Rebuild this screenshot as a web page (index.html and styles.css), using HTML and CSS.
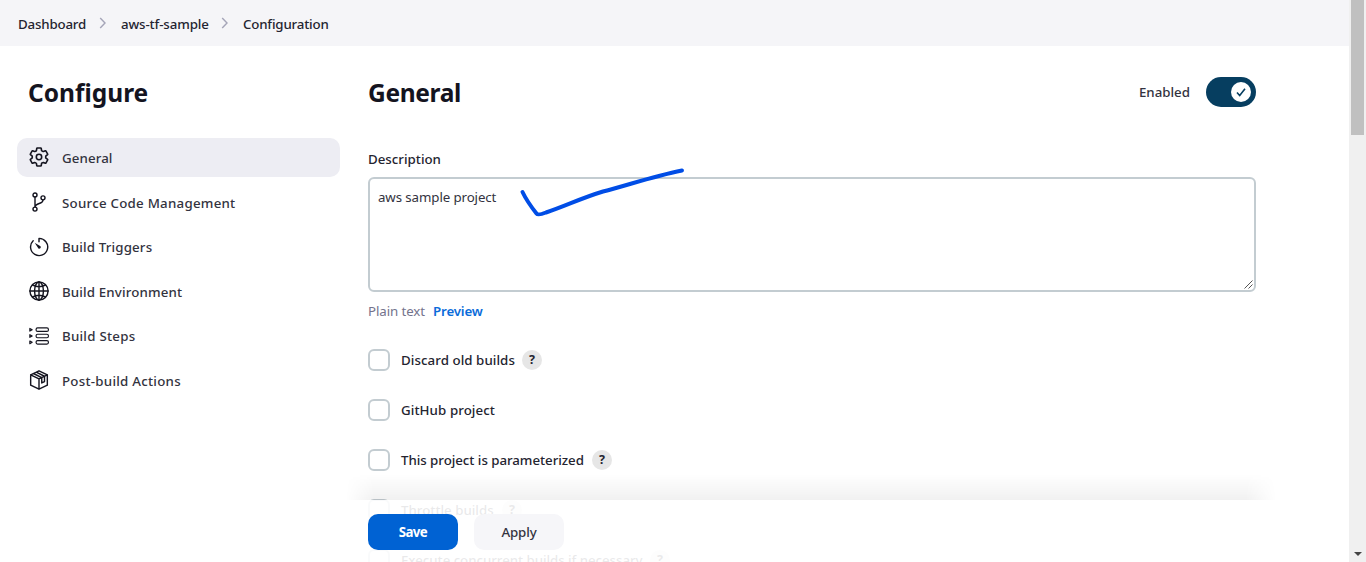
FILE: index.html
```html
<!DOCTYPE html>
<html lang="en">
<head>
<meta charset="utf-8">
<title>aws-tf-sample Config</title>
<link rel="stylesheet" href="styles.css">
</head>
<body>
<div class="page">
  <nav class="breadcrumbs">
    <span class="crumb crumb-first">Dashboard</span>
    <svg class="chevron" viewBox="0 0 8 12"><path d="M1.2 1l4.800 5-4.800 5"/></svg>
    <span class="crumb crumb-project">aws-tf-sample</span>
    <svg class="chevron" viewBox="0 0 8 12"><path d="M1.2 1l4.800 5-4.800 5"/></svg>
    <span class="crumb">Configuration</span>
  </nav>
  <div class="columns">
    <aside class="sidebar">
      <h1 class="title side-title">Configure</h1>
      <div class="tasks">
        <a class="task active"><svg class="icon" viewBox="18 18 476 476"><circle cx="256" cy="256" r="64"/><path d="M416.39 256a154.34 154.34 0 01-1.53 20.79l45.21 35.46a10.81 10.81 0 012.45 13.75l-42.77 74a10.81 10.81 0 01-13.14 4.59l-44.9-18.08a16.11 16.11 0 00-15.17 1.75A164.48 164.48 0 01325 400.8a15.94 15.94 0 00-8.82 12.14l-6.73 47.89a11.08 11.08 0 01-10.68 9.17h-85.54a11.11 11.11 0 01-10.69-8.87l-6.72-47.82a16.07 16.07 0 00-9-12.22 155.3 155.3 0 01-21.46-12.57 16 16 0 00-15.11-1.71l-44.89 18.07a10.81 10.81 0 01-13.14-4.58l-42.77-74a10.8 10.8 0 012.45-13.75l38.21-30a16.05 16.05 0 006-14.08c-.36-4.17-.58-8.33-.58-12.5s.21-8.27.58-12.35a16 16 0 00-6.07-13.94l-38.19-30A10.81 10.81 0 0149.48 186l42.77-74a10.81 10.81 0 0113.14-4.59l44.9 18.08a16.11 16.11 0 0015.17-1.75A164.48 164.48 0 01187 111.2a15.94 15.94 0 008.82-12.14l6.73-47.89A11.08 11.08 0 01213.23 42h85.54a11.11 11.11 0 0110.69 8.87l6.72 47.82a16.07 16.07 0 009 12.22 155.3 155.3 0 0121.46 12.57 16 16 0 0015.11 1.71l44.89-18.07a10.81 10.81 0 0113.14 4.58l42.77 74a10.8 10.8 0 01-2.45 13.75l-38.21 30a16.05 16.05 0 00-6.05 14.08c.33 4.14.55 8.3.55 12.47z"/></svg><span>General</span></a>
        <a class="task t-scm"><svg class="icon" viewBox="0 0 24 24"><circle cx="7.200" cy="3.500" r="2.400"/><circle cx="7.200" cy="20.500" r="2.400"/><circle cx="16.800" cy="7" r="2.400"/><path d="M7.200 6v12M16.800 9.500c0 5.500-8.800 3-9.600 8.500"/></svg><span>Source Code Management</span></a>
        <a class="task t-triggers"><svg class="icon" viewBox="0 0 24 24"><path d="M12 5.800V1.700A10.300 10.300 0 1 1 5 4.600"/><path class="solid" d="M6.800 6.800l7 4.400a1.800 1.800 0 0 1-2.500 2.500z"/></svg><span>Build Triggers</span></a>
        <a class="task t-env"><svg class="icon" viewBox="0 0 24 24"><circle cx="12" cy="12" r="10.900"/><ellipse cx="12" cy="12" rx="5.300" ry="10.900"/><path d="M12 1v22M1 12h22M4.300 4.800q7.700 4 15.400 0M4.300 19.200q7.700-4 15.400 0"/></svg><span>Build Environment</span></a>
        <a class="task"><svg class="icon thin" viewBox="0 0 24 24"><rect x="8.500" y="2.300" width="14.800" height="4.200" rx="1.800"/><rect x="8.500" y="9.900" width="14.800" height="4.200" rx="1.800"/><rect x="8.500" y="17.500" width="14.800" height="4.200" rx="1.800"/><path d="M1 2.900v3.200l2.800-1.600zM1 10.400v3.200l2.800-1.600zM1 18v3.200l2.800-1.600z"/></svg><span>Build Steps</span></a>
        <a class="task t-post"><svg class="icon" viewBox="0 0 24 24"><path d="M12 1l10 4.800v12.400L12 23 2 18.200V5.800zM2 5.800l10 4.800 10-4.800M12 10.600V23M5.300 4.200l10 4.900M8.600 2.600l10 4.900M15.300 9.100v6.400l3.300-1.600V7.500"/></svg><span>Post-build Actions</span></a>
      </div>
    </aside>
    <main class="main">
      <header class="heading">
        <h1 class="title main-title">General</h1>
        <div class="enable"><span class="enabled-text">Enabled</span>
          <span class="toggle"><span class="knob"><svg class="check" viewBox="0 0 20 20"><path d="M6 10.500l2.700 3L14 6.800"/></svg></span></span>
        </div>
      </header>
      <label class="label">Description</label>
      <div class="textarea"><span class="value">aws sample project</span>
        <svg class="grip" viewBox="0 0 9 9"><path d="M.5 8.500l8-8M4.500 8.500l4-4"/></svg>
        <svg class="stroke" viewBox="0 0 170 54"><path d="M4.500 7Q9 16.500 18.500 28.500Q20 30.500 28 27.500C49 20.500 62 13.500 85 6.500C109 .5 134-8.500 164-14.500"/></svg>
      </div>
      <div class="format"><span class="plain">Plain text</span><a class="preview">Preview</a></div>
      <div class="options">
        <div class="option"><span class="box"></span><span class="option-text t-discard">Discard old builds</span><span class="help">?</span></div>
        <div class="option"><span class="box"></span><span class="option-text t-github">GitHub project</span></div>
        <div class="option"><span class="box"></span><span class="option-text t-param">This project is parameterized</span><span class="help">?</span></div>
        <div class="option"><span class="box"></span><span class="option-text t-throttle">Throttle builds</span><span class="help">?</span></div>
        <div class="option"><span class="box"></span><span class="option-text t-concurrent">Execute concurrent builds if necessary</span><span class="help">?</span></div>
      </div>
    </main>
  </div>
  <div class="bottom-shadow"></div>
  <div class="bottom-bar"><button class="button primary">Save</button><button class="button">Apply</button></div>
  <div class="scrollbar"><div class="thumb"></div><svg class="arrow" viewBox="0 0 8 4"><path d="M0 0h8L4 4z"/></svg></div>
</div>
</body>
</html>
```
FILE: styles.css
```css
* { box-sizing: border-box; }
body { margin: 0; overflow: hidden; background: #fff; color: #242430; font: 500 13.3px/20px "Noto Sans", "Open Sans", sans-serif; }
.page { position: relative; width: 1366px; height: 562px; overflow: hidden; }
.breadcrumbs { display: flex; align-items: center; height: 46px; padding: 2px 0 0 18px; background: #f5f5f8; }
.crumb { white-space: nowrap; letter-spacing: -.18px; }
.crumb-first { width: 68px; }
.crumb-project { width: 88px; padding-left: 1px; letter-spacing: -.12px; }
.chevron { width: 8px; height: 12px; margin: -3px 13px 0; fill: none; stroke: #a5a5b8; stroke-width: 1.4; }
.crumb-project + .chevron { margin-right: 14px; }
.columns { display: flex; }
.sidebar { width: 368px; padding: 30px 28px 0 17px; }
.title { margin: 0; color: #14141f; font-size: 24.5px; line-height: 34px; font-weight: 700; }
.side-title { padding-left: 11px; }
.main-title { letter-spacing: -.35px; }
.tasks { display: flex; flex-direction: column; gap: 5.6px; margin-top: 28px; }
.task { display: flex; align-items: center; gap: 13px; width: 323px; height: 39px; padding: 1px 12px 0; border-radius: 10px; color: #333340; letter-spacing: .25px; white-space: nowrap; }
.t-triggers, .t-env { letter-spacing: .15px; }
.active { background: #ededf3; letter-spacing: .1px; }
.icon { width: 20px; height: 20px; margin: -1px 0 0; overflow: visible; fill: none; stroke: #14141f; stroke-width: 1.7; stroke-linejoin: round; stroke-linecap: round; }
.active .icon { margin-top: -2px; stroke-width: 38; }
.icon.thin { stroke-width: 1.4; }
.icon .solid { fill: #14141f; stroke: none; }
.main { width: 888px; padding-top: 30px; }
.heading { display: flex; justify-content: space-between; height: 72px; }
.enable { display: flex; align-items: center; gap: 16px; height: 32px; color: #333340; }
.toggle { display: flex; align-items: center; justify-content: flex-end; width: 50px; height: 30px; padding: 5px; border-radius: 15px; background: #063e60; }
.knob { width: 20px; height: 20px; border-radius: 50%; background: #fff; }
.check { display: block; width: 20px; height: 20px; fill: none; stroke: #063e60; stroke-width: 1.6; }
.label { display: block; margin: 1px 0 8px; }
.textarea { position: relative; width: 888px; height: 115px; padding: 8px; border: 2px solid #c3ccd1; border-radius: 6px; font-weight: 400; letter-spacing: -.1px; color: #333340; }
.grip { position: absolute; right: 1px; bottom: 1px; width: 9px; height: 9px; fill: none; stroke: #555; stroke-width: 1; }
.stroke { position: absolute; left: 148px; top: 6px; width: 170px; height: 54px; overflow: visible; fill: none; stroke: #004de6; stroke-width: 4; stroke-linecap: round; stroke-linejoin: round; }
.format { display: flex; gap: 8px; margin-top: 9px; }
.plain { width: 57px; white-space: nowrap; font-weight: 400; letter-spacing: -.1px; color: #73738c; }
.preview { font-weight: 600; letter-spacing: -.15px; color: #0b6cda; }
.options { display: flex; flex-direction: column; gap: 28px; margin-top: 28px; }
.option { display: flex; align-items: center; height: 22px; }
.box { width: 22px; height: 22px; margin-right: 11px; border: 2px solid #c3ccd1; border-radius: 6px; }
.option-text { white-space: nowrap; }
.t-discard { width: 121px; letter-spacing: .06px; }
.t-github { letter-spacing: .08px; }
.t-param { width: 191px; letter-spacing: -.04px; }
.t-throttle { width: 101px; }
.t-concurrent { width: 249px; letter-spacing: -.05px; }
.help { width: 20px; height: 20px; border-radius: 50%; background: #e6e6e6; font-weight: 700; font-size: 12.5px; text-align: center; }
.bottom-shadow { position: absolute; left: 346px; top: 474px; width: 930px; height: 26px; background: linear-gradient(to bottom, transparent, rgba(0,0,0,.055)); mask-image: linear-gradient(to right, transparent, #000 28px, #000 900px, transparent); }
.bottom-bar { position: absolute; left: 346px; top: 500px; width: 930px; height: 62px; display: flex; gap: 16px; padding: 14px 22px; background: rgba(255,255,255,.9); }
.button { width: 90px; height: 36px; padding: 0; border: 0; border-radius: 10px; background: #f6f6f9; color: #333340; font: inherit; letter-spacing: -.15px; }
.primary { background: #0062d3; color: #fff; font-weight: 700; letter-spacing: -.6px; }
.scrollbar { position: absolute; right: 0; top: 0; width: 17px; height: 562px; background: #f0f0f0; }
.thumb { width: 13px; height: 135px; margin-left: 2px; background: #c0c0c0; }
.arrow { position: absolute; left: 5px; bottom: 6px; width: 8px; height: 4px; fill: #444; }
```
